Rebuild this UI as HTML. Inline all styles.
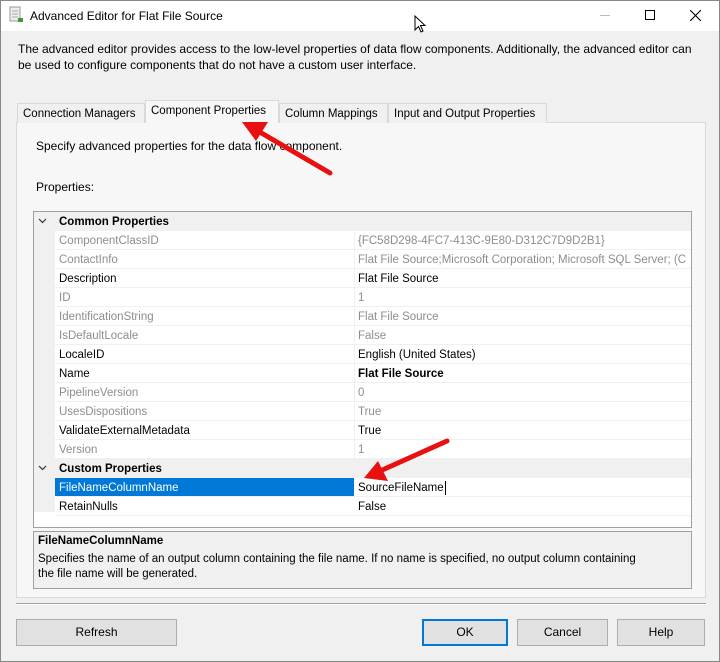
<!DOCTYPE html>
<html><head><style>
*{box-sizing:border-box;margin:0;padding:0}
body{width:720px;height:662px;background:#f0f0f0;font-family:"Liberation Sans",sans-serif;font-size:11.5px;color:#000;position:relative;overflow:hidden}
.abs{position:absolute}
.win{position:absolute;left:0;top:0;width:720px;height:662px;border:1px solid #888}
.title{left:1px;top:1px;width:718px;height:30px;background:#fff}
.tab{position:absolute;top:103px;height:20px;border:1px solid #d9d9d9;border-bottom:none;background:#f0f0f0;padding:4px 5px 0;white-space:nowrap}
.row{position:absolute;left:55px;width:636px;height:19px;border-bottom:1px solid #f0f0f0;background:#fff}
.row span{position:absolute;top:4px}
.n{left:4px}.v{left:303px}
.g{color:#8d8d8d}
.btn{position:absolute;top:619px;height:27px;border:1px solid #adadad;background:#e1e1e1;text-align:center;line-height:25px;font-size:12px}
</style></head><body>
<div class="win"></div>
<div class="abs title"></div>
<svg class="abs" style="left:8px;top:6px" width="16" height="18"><rect x="2" y="1" width="10" height="14" fill="#eee" stroke="#999"/><line x1="4" y1="5" x2="10" y2="5" stroke="#aaa"/><line x1="4" y1="8" x2="10" y2="8" stroke="#aaa"/><line x1="4" y1="11" x2="10" y2="11" stroke="#aaa"/><rect x="10" y="12" width="5" height="4" fill="#3a9a3a"/></svg>
<div class="abs" style="left:30px;top:9px;font-size:12px">Advanced Editor for Flat File Source</div>
<div class="abs" style="left:600px;top:15px;width:10px;height:1px;background:#bbb"></div>
<div class="abs" style="left:645px;top:10px;width:10px;height:10px;border:1px solid #000"></div>
<svg class="abs" style="left:690px;top:10px" width="11" height="11"><path d="M0 0L11 11M11 0L0 11" stroke="#000" stroke-width="1.1"/></svg>
<svg class="abs" style="left:414px;top:15px" width="14" height="20"><path d="M1 1L1 15L4.5 11.5L7 17L9 16L6.5 10.5L11 10.5Z" fill="#fff" stroke="#000"/></svg>
<div class="abs" style="left:18px;top:41px;line-height:16px;font-size:12px;width:700px">The advanced editor provides access to the low-level properties of data flow components. Additionally, the advanced editor can<br>be used to configure components that do not have a custom user interface.</div>
<div class="abs" style="left:16px;top:122px;width:690px;height:476px;border:1px solid #d9d9d9;background:#f7f7f7"></div>
<div class="tab" style="left:17px;width:128px">Connection Managers</div>
<div class="tab" style="left:145px;top:100px;height:23px;width:134px;background:#f7f7f7;padding-top:4px">Component Properties</div>
<div class="tab" style="left:279px;width:109px">Column Mappings</div>
<div class="tab" style="left:388px;width:159px">Input and Output Properties</div>
<div class="abs" style="left:36px;top:139px;font-size:12px">Specify advanced properties for the data flow component.</div>
<div class="abs" style="left:36px;top:180px;font-size:12px">Properties:</div>
<div class="abs" style="left:33px;top:211px;width:659px;height:317px;border:1px solid #a0a0a0;background:#fff"></div>
<div class="abs" style="left:34px;top:212px;width:21px;height:300px;background:#f0f0f0"></div>
<div class="abs" style="left:34px;top:212px;width:657px;height:19px;background:#f0f0f0"></div>
<svg class="abs" style="left:38px;top:218px" width="9" height="6"><path d="M1 1L4.5 4.5L8 1" fill="none" stroke="#333" stroke-width="1.2"/></svg>
<div class="abs" style="left:59px;top:216px;font-weight:bold">Common Properties</div>
<div class="row" style="top:231px"><span class="n g">ComponentClassID</span><span class="v g">{FC58D298-4FC7-413C-9E80-D312C7D9D2B1}</span></div>
<div class="row" style="top:250px"><span class="n g">ContactInfo</span><span class="v g" style="white-space:nowrap;width:333px;overflow:hidden">Flat File Source;Microsoft Corporation; Microsoft SQL Server; (C</span></div>
<div class="row" style="top:269px"><span class="n">Description</span><span class="v">Flat File Source</span></div>
<div class="row" style="top:288px"><span class="n g">ID</span><span class="v g">1</span></div>
<div class="row" style="top:307px"><span class="n g">IdentificationString</span><span class="v g">Flat File Source</span></div>
<div class="row" style="top:326px"><span class="n g">IsDefaultLocale</span><span class="v g">False</span></div>
<div class="row" style="top:345px"><span class="n">LocaleID</span><span class="v">English (United States)</span></div>
<div class="row" style="top:364px"><span class="n">Name</span><span class="v" style="font-weight:bold">Flat File Source</span></div>
<div class="row" style="top:383px"><span class="n g">PipelineVersion</span><span class="v g">0</span></div>
<div class="row" style="top:402px"><span class="n g">UsesDispositions</span><span class="v g">True</span></div>
<div class="row" style="top:421px"><span class="n">ValidateExternalMetadata</span><span class="v">True</span></div>
<div class="row" style="top:440px"><span class="n g">Version</span><span class="v g">1</span></div>
<div class="abs" style="left:34px;top:459px;width:657px;height:19px;background:#f0f0f0"></div>
<svg class="abs" style="left:38px;top:465px" width="9" height="6"><path d="M1 1L4.5 4.5L8 1" fill="none" stroke="#333" stroke-width="1.2"/></svg>
<div class="abs" style="left:59px;top:463px;font-weight:bold">Custom Properties</div>
<div class="row" style="top:478px"><span class="n" style="left:0;top:0;width:299px;height:18px;background:#0078d7"></span><span class="n" style="color:#fff">FileNameColumnName</span><span class="v">SourceFileName</span></div>
<div class="abs" style="left:445px;top:481px;width:1px;height:14px;background:#000"></div>
<div class="row" style="top:497px"><span class="n">RetainNulls</span><span class="v">False</span></div>
<div class="abs" style="left:354px;top:231px;width:1px;height:228px;background:#f0f0f0"></div>
<div class="abs" style="left:33px;top:531px;width:659px;height:58px;border:1px solid #a0a0a0;background:#f0f0f0"></div>
<div class="abs" style="left:38px;top:535px;font-weight:bold">FileNameColumnName</div>
<div class="abs" style="left:38px;top:552px;line-height:15px;width:650px;white-space:nowrap">Specifies the name of an output column containing the file name. If no name is specified, no output column containing<br>the file name will be generated.</div>
<div class="abs" style="left:16px;top:603px;width:690px;height:2px;border-top:1px solid #a0a0a0;border-bottom:1px solid #fff"></div>
<div class="btn" style="left:16px;width:161px">Refresh</div>
<div class="btn" style="left:422px;width:86px;border:1px solid #0078d7;box-shadow:inset 0 0 0 1px #0078d7">OK</div>
<div class="btn" style="left:517px;width:91px">Cancel</div>
<div class="btn" style="left:617px;width:88px">Help</div>
<svg class="abs" style="left:0;top:0" width="720" height="662">
<line x1="330" y1="173" x2="258" y2="131" stroke="#e81010" stroke-width="5" stroke-linecap="round"/>
<polygon points="242,122 268,122 256,141" fill="#e81010"/>
<line x1="447" y1="441" x2="380" y2="471" stroke="#e81010" stroke-width="5" stroke-linecap="round"/>
<polygon points="364,478 378,461 388,481" fill="#e81010"/>
</svg>
</body></html>
